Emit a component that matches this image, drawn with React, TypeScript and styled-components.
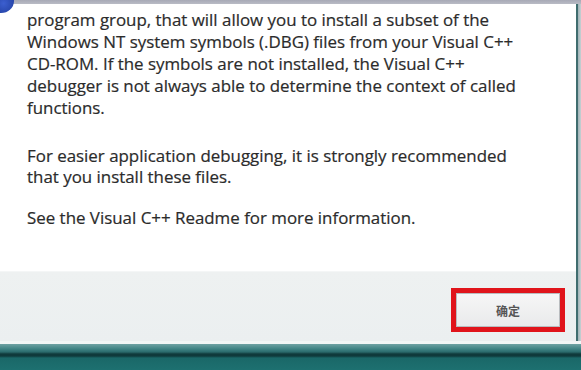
import styled, { createGlobalStyle } from "styled-components";

const GlobalStyle = createGlobalStyle`
    html, body {
        margin: 0;
        padding: 0;
        background: #1d6a6a;
    }
    #root {
        width: 581px;
        height: 370px;
        overflow: hidden;
    }
`

const Screen = styled.div`
    position: relative;
    width: 581px;
    height: 370px;
    display: flex;
    flex-direction: column;
    background: #ffffff;
    font-family: "Open Sans", "Noto Sans", sans-serif;
`

const TitleStrip = styled.div`
    height: 4px;
    background: linear-gradient(#a7a9b6, #b9bbc5);
`

const WindowRow = styled.div`
    flex: 1;
    display: flex;
    flex-direction: row;
`

const DialogPane = styled.div`
    flex: 1;
    display: flex;
    flex-direction: column;
`

const RightFrame = styled.div`
    width: 3px;
    border-left: 2px solid #3f6d6f;
    background: linear-gradient(90deg, #9fb2b6, #c7d2d4);
`

const MessageArea = styled.div`
    flex: 1;
    background: #ffffff;
    padding: 5px 10px 0 27px;
    color: #2b2b2b;
    font-size: 16.9px;
    line-height: 21.9px;
    white-space: nowrap;
`

const Paragraph = styled.p<{ $top?: number; $gap?: number }>`
    margin: ${(p) => p.$top ?? 0}px 0 ${(p) => p.$gap ?? 0}px 0;
    -webkit-text-stroke: 0.2px #2b2b2b;
`

const Footer = styled.div`
    height: 70px;
    background: linear-gradient(#eef1f1, #ebeff0);
    border-top: 1px solid #f4f6f6;
    display: flex;
    justify-content: flex-end;
    align-items: flex-start;
    padding: 16px 11px 0 0;
    box-sizing: border-box;
`

const Highlight = styled.div`
    border: 5px solid #e0141b;
    width: 114px;
    height: 44px;
    box-sizing: border-box;
    display: flex;
`

const OkButton = styled.button`
    flex: 1;
    margin: 0;
    border: 1px solid #b9bcbf;
    background: linear-gradient(#f6f6f6, #e9eaeb);
    font-family: "Noto Sans CJK SC", sans-serif;
    font-size: 12px;
    font-weight: 700;
    color: #555555;
    padding: 0;
    cursor: pointer;
`

const Taskbar = styled.div`
    height: 26px;
    border-top: 3px solid #f2f6f6;
    background: linear-gradient(
        #6fa3a4 0px,
        #3f8384 5px,
        #2a6b6c 8px,
        #0f3a3b 10px,
        #0f3a3b 12px,
        #1a6868 14px,
        #1d7070 100%
    );
`

const AppIcon = styled.div`
    position: absolute;
    left: -12px;
    top: -11px;
    width: 26px;
    height: 24px;
    border-radius: 50%;
    background: radial-gradient(circle at 60% 60%, #3c5fd0, #1e3b9a 70%, #15307a);
`

const App: React.FC = () => {
    return (
        <>
            <GlobalStyle />
            <Screen>
                <TitleStrip />
                <WindowRow>
                    <DialogPane>
                        <MessageArea>
                            <Paragraph $gap={26}>
                                program group, that will allow you to install a subset of the<br />
                                Windows NT system symbols (.DBG) files from your Visual C++<br />
                                CD-ROM. If the symbols are not installed, the Visual C++<br />
                                debugger is not always able to determine the context of called<br />
                                functions.
                            </Paragraph>
                            <Paragraph>
                                For easier application debugging, it is strongly recommended<br />
                                that you install these files.
                            </Paragraph>
                            <Paragraph $top={19}>
                                See the Visual C++ Readme for more information.
                            </Paragraph>
                        </MessageArea>
                        <Footer>
                            <Highlight>
                                <OkButton>确定</OkButton>
                            </Highlight>
                        </Footer>
                    </DialogPane>
                    <RightFrame />
                </WindowRow>
                <Taskbar />
                <AppIcon />
            </Screen>
        </>
    );
};

export default App;
